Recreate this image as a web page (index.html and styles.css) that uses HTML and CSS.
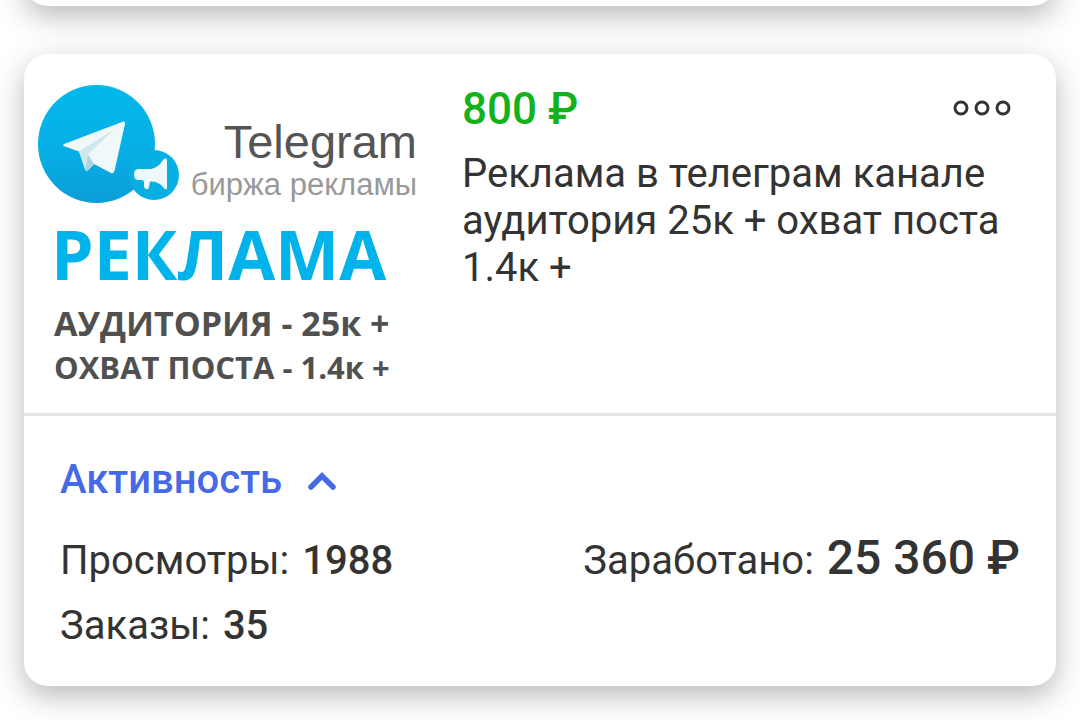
FILE: index.html
```html
<!DOCTYPE html>
<html lang="ru">
<head>
<meta charset="utf-8">
<meta name="viewport" content="width=device-width, initial-scale=1">
<title>Мои кворки</title>
<link rel="stylesheet" href="styles.css">
</head>
<body>
<main class="feed">
  <div class="card card-previous"></div>
  <article class="card">
    <div class="summary">
      <div class="cover">
        <div class="brand">
          <svg class="logo" viewBox="0 0 142 120" aria-hidden="true">
            <defs>
              <linearGradient id="sky" x1="0" y1="0" x2="0" y2="1">
                <stop offset="0" stop-color="#03b8ea"/>
                <stop offset=".5" stop-color="#06b0e6"/>
                <stop offset="1" stop-color="#0b9ed8"/>
              </linearGradient>
            </defs>
            <ellipse cx="58.500" cy="60" rx="58.500" ry="59" fill="url(#sky)"/>
            <path d="M26 60Q24 61.500 27 62.500L41 67.500 47 85Q48 88 50 86L56 80 73 89Q75.500 90 76.500 87L87 40Q87.500 36.500 84 38Z" fill="#eff9fa"/>
            <path d="M41 67.500L76 45.500 50 70.500 56 80 50 86Q48 88 47 85Z" fill="#cfe8ef"/>
            <path d="M50 71L56 80 50 86Q48 88 47.500 85Z" fill="#aad5e2"/>
            <circle cx="116" cy="91" r="25" fill="#07afe3"/>
            <path d="M101 85H113Q120 84 125 76Q129 72 129 77V103Q129 108 125 103Q120 97 112 97.500L111 103Q110.500 106 108 105 106 104.500 106 102V98Q106 96 103 96H101Q96 96 96 90.500 96 85 101 85Z" fill="#edf9fb"/>
          </svg>
          <div class="brand-text">
            <span class="brand-name">Telegram</span>
            <span class="brand-tagline">биржа рекламы</span>
          </div>
        </div>
        <div class="cover-title">РЕКЛАМА</div>
        <div class="cover-line">АУДИТОРИЯ - 25к +</div>
        <div class="cover-line cover-line-small">ОХВАТ ПОСТА - 1.4к +</div>
      </div>
      <div class="details">
        <div class="price-row">
          <strong class="price">800 ₽</strong>
          <button class="more" type="button" aria-label="Меню">
            <svg class="more-icon" viewBox="0 0 60 18" aria-hidden="true">
              <g fill="none" stroke="#333" stroke-width="3">
                <circle cx="9" cy="9" r="6"/><circle cx="30" cy="9" r="6"/><circle cx="51" cy="9" r="6"/>
              </g>
            </svg>
          </button>
        </div>
        <h2 class="title">Реклама в телеграм канале аудитория 25к + охват поста 1.4к +</h2>
      </div>
    </div>
    <section class="activity">
      <button class="toggle" type="button" aria-expanded="true">
        <span>Активность</span>
        <svg class="chevron" viewBox="0 0 28 20" aria-hidden="true"><path d="M3 17L14 6 25 17" fill="none" stroke="#4669e8" stroke-width="5.500" stroke-linecap="round"/></svg>
      </button>
      <div class="stats">
        <div class="stat">Просмотры: <b class="value">1988</b></div>
        <div class="stat">Заработано: <b class="value value-large">25 360 ₽</b></div>
      </div>
      <div class="stats">
        <div class="stat">Заказы: <b class="value">35</b></div>
      </div>
    </section>
  </article>
</main>
</body>
</html>
```
FILE: styles.css
```css
* { box-sizing: border-box; }
body {
  margin: 0;
  background: #fff;
  color: #333;
  font-family: Roboto, "Noto Sans", sans-serif;
  overflow: hidden;
}
button {
  padding: 0;
  border: 0;
  background: none;
  font: inherit;
  cursor: pointer;
}
svg { display: block; }
.feed {
  display: flex;
  flex-direction: column;
  gap: 48px;
  padding: 0 24px 34px;
}
.card {
  border-radius: 24px;
  background: #fff;
  box-shadow: 0 10px 30px rgba(0, 0, 0, .28);
}
.card-previous {
  min-height: 48px;
  margin-top: -42px;
}
.summary {
  display: flex;
  min-height: 362px;
  border-bottom: 3px solid #e5e5e5;
}
.cover {
  flex: none;
  width: 400px;
  padding: 30px 7px 0 14px;
}
.brand {
  display: flex;
  justify-content: space-between;
}
.logo {
  flex: none;
  width: 142px;
  height: 120px;
}
.brand-text {
  display: flex;
  flex-direction: column;
  align-items: flex-end;
  padding-top: 32px;
  margin-left: -20px;
  font-family: "Liberation Sans", Arial, sans-serif;
  white-space: nowrap;
}
.brand-name {
  color: #555;
  font-size: 47px;
  line-height: 52px;
}
.brand-tagline {
  color: #999;
  font-size: 31px;
  line-height: 34px;
}
.cover-title {
  padding: 12px 0 8px 13px;
  color: #00b3ea;
  font: bold 68px/76px "Open Sans", "Noto Sans", sans-serif;
}
.cover-line {
  padding-left: 16px;
  color: #505050;
  font: bold 34px/46px "Open Sans", "Noto Sans", sans-serif;
  white-space: nowrap;
}
.cover-line-small {
  font-size: 31px;
  line-height: 42px;
}
.details {
  flex: 1;
  min-width: 0;
  padding: 30px 44px 24px 38px;
}
.price-row {
  display: flex;
  align-items: center;
  justify-content: space-between;
}
.price {
  color: #13b11a;
  font-size: 44px;
  line-height: 50px;
  font-weight: 500;
}
.more { padding-bottom: 2px; }
.more-icon {
  width: 60px;
  height: 18px;
}
.title {
  margin: 16px 0 0;
  font-size: 40px;
  line-height: 47px;
  font-weight: 400;
}
.activity {
  padding: 40px 36px 30px;
}
.toggle {
  display: flex;
  align-items: center;
  gap: 26px;
  margin-bottom: 24px;
  color: #4669e8;
  font-size: 40px;
  line-height: 48px;
  font-weight: 500;
}
.chevron {
  width: 28px;
  height: 20px;
}
.stats {
  display: flex;
  align-items: baseline;
  justify-content: space-between;
}
.stats + .stats { margin-top: 5px; }
.stat {
  font-size: 40px;
  line-height: 60px;
}
.value {
  margin-left: 3px;
  font-weight: 500;
}
.value-large { font-size: 48px; }
```
